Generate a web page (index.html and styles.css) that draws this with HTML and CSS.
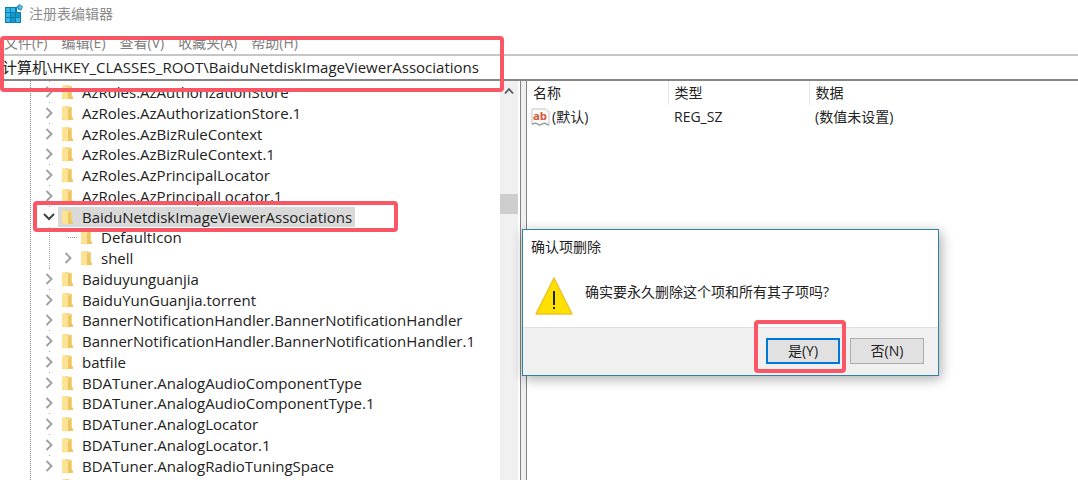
FILE: index.html
```html
<!DOCTYPE html>
<html lang="zh-CN">
<head>
<meta charset="utf-8">
<title>注册表编辑器</title>
<link rel="stylesheet" href="styles.css">
</head>
<body>
<svg class="defs" aria-hidden="true">
  <symbol id="folder" viewBox="0 0 12 16">
    <path d="M1 2 6 1 11 2V10L11 15H1Z" fill="#f3d583"/>
    <path d="M1 1 7 3V16L1 14Z" fill="#ffe394"/>
    <path d="M7 4 10 3V11L12 13V15H7Z" fill="#edc563"/>
  </symbol>
  <symbol id="closed" viewBox="0 0 12 12"><path d="M3.500 1 8.500 6 3.500 11" fill="none" stroke="#a0a0a0" stroke-width="1.900"/></symbol>
  <symbol id="open" viewBox="0 0 12 12"><path d="M1 3 6 8 11 3" fill="none" stroke="#404040" stroke-width="2"/></symbol>
</svg>
<div class="window">
  <header class="titlebar">
    <svg class="app-icon" viewBox="0 0 20 20" aria-hidden="true">
      <path d="M1 3H13V8H17V19H1Z" fill="#0a7fb0"/>
      <path d="M2 4H6V8H2ZM7 4H11V8H7ZM2 9H6V13H2ZM2 14H6V18H2ZM12 14H16V18H12Z" fill="#35b5e5"/>
      <path d="M7 9H11V13H7ZM12 9H16V13H12ZM7 14H11V18H7Z" fill="#1496c8"/>
      <path d="M15.500 0 19 2.500 17.500 6.500 14 6 12.500 2.500Z" fill="#3d9fc6"/>
      <path d="M15 2 17.500 3 16 5Z" fill="#8bd3ee"/>
    </svg>
    <h1 class="title">注册表编辑器</h1>
  </header>
  <nav class="menubar">
    <button class="menu">文件(F)</button>
    <button class="menu">编辑(E)</button>
    <button class="menu">查看(V)</button>
    <button class="menu">收藏夹(A)</button>
    <button class="menu">帮助(H)</button>
  </nav>
  <div class="address">
    <input class="address-input" aria-label="地址" value="计算机\HKEY_CLASSES_ROOT\BaiduNetdiskImageViewerAssociations">
    <span class="mark mark-address"></span>
  </div>
  <main class="panes">
    <section class="tree-pane">
      <ul class="tree">
        <li class="row"><button class="toggle" aria-label="展开"><svg><use href="#closed"/></svg></button><span class="key"><svg class="folder"><use href="#folder"/></svg>AzRoles.AzAuthorizationStore</span></li>
        <li class="row"><button class="toggle" aria-label="展开"><svg><use href="#closed"/></svg></button><span class="key"><svg class="folder"><use href="#folder"/></svg>AzRoles.AzAuthorizationStore.1</span></li>
        <li class="row"><button class="toggle" aria-label="展开"><svg><use href="#closed"/></svg></button><span class="key"><svg class="folder"><use href="#folder"/></svg>AzRoles.AzBizRuleContext</span></li>
        <li class="row"><button class="toggle" aria-label="展开"><svg><use href="#closed"/></svg></button><span class="key"><svg class="folder"><use href="#folder"/></svg>AzRoles.AzBizRuleContext.1</span></li>
        <li class="row"><button class="toggle" aria-label="展开"><svg><use href="#closed"/></svg></button><span class="key"><svg class="folder"><use href="#folder"/></svg>AzRoles.AzPrincipalLocator</span></li>
        <li class="row"><button class="toggle" aria-label="展开"><svg><use href="#closed"/></svg></button><span class="key"><svg class="folder"><use href="#folder"/></svg>AzRoles.AzPrincipalLocator.1</span></li>
        <li class="row current"><button class="toggle" aria-label="折叠"><svg><use href="#open"/></svg></button><span class="key selected"><svg class="folder"><use href="#folder"/></svg>BaiduNetdiskImageViewerAssociations</span><span class="mark mark-key"></span></li>
        <li class="row child"><span class="toggle leaf"></span><span class="key"><svg class="folder"><use href="#folder"/></svg>DefaultIcon</span></li>
        <li class="row child"><button class="toggle" aria-label="展开"><svg><use href="#closed"/></svg></button><span class="key"><svg class="folder"><use href="#folder"/></svg>shell</span></li>
        <li class="row"><button class="toggle" aria-label="展开"><svg><use href="#closed"/></svg></button><span class="key"><svg class="folder"><use href="#folder"/></svg>Baiduyunguanjia</span></li>
        <li class="row"><button class="toggle" aria-label="展开"><svg><use href="#closed"/></svg></button><span class="key"><svg class="folder"><use href="#folder"/></svg>BaiduYunGuanjia.torrent</span></li>
        <li class="row"><button class="toggle" aria-label="展开"><svg><use href="#closed"/></svg></button><span class="key"><svg class="folder"><use href="#folder"/></svg>BannerNotificationHandler.BannerNotificationHandler</span></li>
        <li class="row"><button class="toggle" aria-label="展开"><svg><use href="#closed"/></svg></button><span class="key"><svg class="folder"><use href="#folder"/></svg>BannerNotificationHandler.BannerNotificationHandler.1</span></li>
        <li class="row"><button class="toggle" aria-label="展开"><svg><use href="#closed"/></svg></button><span class="key"><svg class="folder"><use href="#folder"/></svg>batfile</span></li>
        <li class="row"><button class="toggle" aria-label="展开"><svg><use href="#closed"/></svg></button><span class="key"><svg class="folder"><use href="#folder"/></svg>BDATuner.AnalogAudioComponentType</span></li>
        <li class="row"><button class="toggle" aria-label="展开"><svg><use href="#closed"/></svg></button><span class="key"><svg class="folder"><use href="#folder"/></svg>BDATuner.AnalogAudioComponentType.1</span></li>
        <li class="row"><button class="toggle" aria-label="展开"><svg><use href="#closed"/></svg></button><span class="key"><svg class="folder"><use href="#folder"/></svg>BDATuner.AnalogLocator</span></li>
        <li class="row"><button class="toggle" aria-label="展开"><svg><use href="#closed"/></svg></button><span class="key"><svg class="folder"><use href="#folder"/></svg>BDATuner.AnalogLocator.1</span></li>
        <li class="row"><button class="toggle" aria-label="展开"><svg><use href="#closed"/></svg></button><span class="key"><svg class="folder"><use href="#folder"/></svg>BDATuner.AnalogRadioTuningSpace</span></li>
        <li class="row"><button class="toggle" aria-label="展开"><svg><use href="#closed"/></svg></button><span class="key"><svg class="folder"><use href="#folder"/></svg>BDATuner.AnalogRadioTuningSpace.1</span></li>
      </ul>
      <div class="scrollbar">
        <svg class="scroll-up" viewBox="0 0 10 8" aria-hidden="true"><path d="M1 6.500 5 2 9 6.500" fill="none" stroke="#555" stroke-width="1.800"/></svg>
        <span class="thumb"></span>
      </div>
    </section>
    <div class="splitter"></div>
    <section class="values-pane">
      <table class="values">
        <thead><tr><th>名称</th><th>类型</th><th>数据</th></tr></thead>
        <tbody><tr>
          <td><span class="value-name"><svg class="string-icon" viewBox="0 0 20 19" aria-hidden="true">
            <path d="M1 1H15L19 4V18L14 16 9 18 5 16 1 17Z" fill="#fafafa" stroke="#c4c4c4"/>
            <path d="M1 17 5 16 9 18 14 16 19 18" fill="none" stroke="#999" stroke-width="1.500"/>
            <text x="2" y="13" class="string-glyph">ab</text>
          </svg>(默认)</span></td>
          <td>REG_SZ</td><td>(数值未设置)</td>
        </tr></tbody>
      </table>
    </section>
  </main>
  <div class="dialog" role="dialog" aria-labelledby="dialog-title">
    <h2 class="dialog-title" id="dialog-title">确认项删除</h2>
    <div class="dialog-body">
      <svg class="warning" viewBox="0 0 38 38" aria-hidden="true">
        <path d="M19 1 37 37H1Z" fill="#ffe000" stroke="#efc22c" stroke-width="1.500" stroke-linejoin="round"/>
        <path d="M18 14H20V28H18ZM18 30H20V32H18Z" fill="#222"/>
      </svg>
      <p class="message">确实要永久删除这个项和所有其子项吗?</p>
    </div>
    <div class="dialog-actions">
      <div class="action"><button class="btn primary">是(Y)</button><span class="mark mark-yes"></span></div>
      <button class="btn">否(N)</button>
    </div>
  </div>
</div>
</body>
</html>
```
FILE: styles.css
```css
* { box-sizing: border-box; }
body {
  margin: 0;
  background: #fff;
  color: #222;
  font: 14px/20px "Open Sans", "Noto Sans CJK SC", sans-serif;
}
button, input { font: inherit; color: inherit; }
.defs { position: absolute; width: 0; height: 0; }
.window {
  position: relative;
  display: flex;
  flex-direction: column;
  height: 100vh;
  overflow: hidden;
}
.titlebar {
  display: flex;
  align-items: center;
  gap: 5px;
  height: 28px;
  padding: 0 4px;
}
.app-icon { width: 20px; height: 20px; }
.title { margin: 0; font-size: 14px; font-weight: 400; color: #8c8c8c; }
.menubar {
  display: flex;
  gap: 14px;
  height: 26px;
  padding: 4px 4px 0;
  color: #808080;
}
.menu { padding: 0; border: 0; background: none; line-height: 20px; }
.address {
  position: relative;
  z-index: 1;
  height: 27px;
  border-top: 2px solid #c6c6c6;
  border-bottom: 2px solid #868686;
}
.address-input {
  display: block;
  width: 100%;
  height: 23px;
  padding: 0 2px 2px;
  border: 0;
  outline: 0;
  background: #fff;
  font-size: 15px;
}
.mark {
  position: absolute;
  border: 4px solid #f95766;
  border-radius: 4px;
  pointer-events: none;
}
.mark-address { left: 0; top: -20px; width: 504px; height: 56px; }
.mark-key { left: 2px; top: -5px; width: 365px; height: 31px; z-index: 1; }
.mark-yes { inset: -18px -6px -9px -12px; }
.panes { display: flex; flex: 1; min-height: 0; }
.tree-pane { display: flex; flex: 0 0 520px; }
.tree {
  flex: 1;
  margin: 0 0 0 30px;
  padding: 0;
  list-style: none;
  border-left: 1px dotted #888;
  overflow: hidden;
  font-size: 15px;
}
.row {
  display: flex;
  align-items: center;
  height: 21px;
  padding-left: 12px;
  background: repeating-linear-gradient(#aaa 0 1px, transparent 1px 2px) 18px 0 / 1px 100% no-repeat;
}
.row:nth-child(4n) { height: 20px; }
.current { position: relative; }
.child { padding-left: 31px; }
.toggle {
  display: flex;
  flex: none;
  width: 12px;
  padding: 4px 0;
  border: 0;
  background: #fff;
}
.toggle svg { width: 12px; height: 12px; }
.leaf { width: 9px; height: 1px; margin-left: 6px; padding: 0; border-top: 1px dotted #999; margin-right: -3px; }
.key {
  display: flex;
  align-items: center;
  gap: 9px;
  height: 20px;
  margin-left: 3px;
  padding: 0 3px;
  white-space: nowrap;
}
.selected { background: #d9d9d9; }
.folder { width: 12px; height: 16px; }
.scrollbar {
  display: flex;
  flex-direction: column;
  align-items: center;
  flex: 0 0 18px;
  margin-right: 2px;
  background: #f0f0f0;
}
.scroll-up { width: 10px; height: 8px; margin: 6px 0 99px; }
.thumb { width: 18px; height: 20px; background: #cdcdcd; }
.splitter {
  flex: 0 0 7px;
  border: solid #828282;
  border-width: 0 1px;
  background: #f0f0f0;
}
.values-pane { flex: 1; min-width: 0; }
.values { width: 100%; table-layout: fixed; border-collapse: collapse; }
.values th, .values td { padding: 0 6px; text-align: left; font-weight: 400; }
.values th { height: 24px; border-right: 1px solid #e5e5e5; }
.values td { height: 24px; }
.values th:last-child { border: 0; }
.values th:not(:last-child) { width: 141px; }
.value-name { display: flex; align-items: center; gap: 2px; margin-left: -2px; }
.string-icon { width: 19px; height: 18px; overflow: visible; }
.string-glyph { font: bold 12px "Open Sans", sans-serif; fill: #d95536; }
.dialog {
  position: absolute;
  z-index: 2;
  left: 522px;
  top: 229px;
  width: 417px;
  border: 1px solid #2e83a5;
  background: #fff;
  box-shadow: 2px 3px 12px #0005;
}
.dialog-title { margin: 0; padding: 7px 8px 0; font-size: 14px; font-weight: 400; }
.dialog-body { display: flex; gap: 12px; padding: 20px 12px 12px; }
.warning { width: 38px; height: 38px; }
.message { margin: 5px 0 0; }
.dialog-actions {
  display: flex;
  justify-content: flex-end;
  gap: 10px;
  padding: 10px 14px 11px;
  border-top: 1px solid #dfdfdf;
  background: #f0f0f0;
}
.action { position: relative; display: flex; }
.btn { width: 74px; height: 26px; padding: 0; border: 1px solid #adadad; background: #e1e1e1; }
.primary { border: 2px solid #0078d7; }
```
